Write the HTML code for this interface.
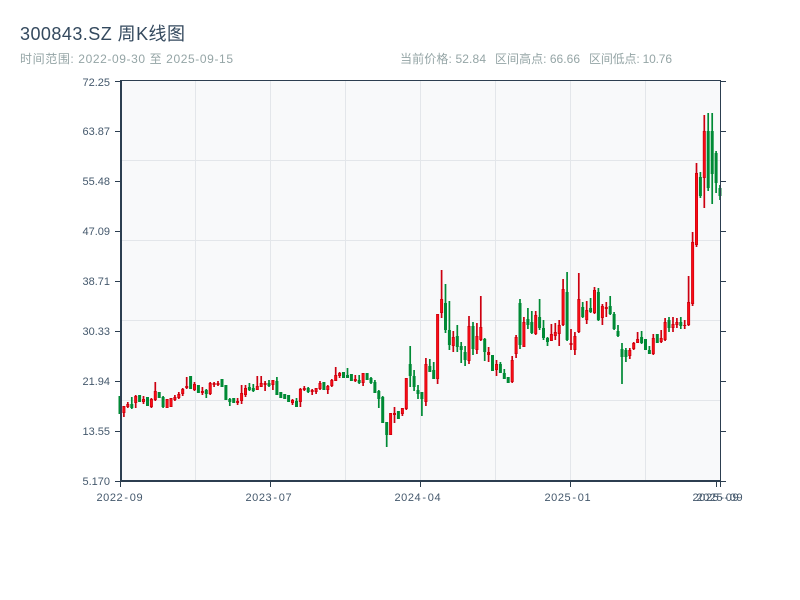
<!DOCTYPE html>
<html lang="zh">
<head>
<meta charset="utf-8">
<title>300843.SZ 周K线图</title>
<style>
html,body{margin:0;padding:0;background:#fff;width:800px;height:600px;overflow:hidden}
svg{display:block}
text{font-family:"Liberation Sans","Noto Sans CJK SC",sans-serif}
</style>
</head>
<body>
<svg width="800" height="600" viewBox="0 0 800 600" xmlns="http://www.w3.org/2000/svg">
<rect width="800" height="600" fill="#fff"/>
<text x="20" y="40" font-size="18" fill="#34495e" textLength="165">300843.SZ 周K线图</text>
<text x="20" y="63" font-size="12" fill="#95a5a6" textLength="213">时间范围: 2022-09-30 至 2025-09-15</text>
<text x="400" y="63" font-size="12" fill="#95a5a6" textLength="86">当前价格: 52.84</text>
<text x="495" y="63" font-size="12" fill="#95a5a6" textLength="85">区间高点: 66.66</text>
<text x="589" y="63" font-size="12" fill="#95a5a6" textLength="83">区间低点: 10.76</text>

<rect x="120" y="81" width="600" height="400" fill="#f8f9fa"/>
<path d="M120 160.5H720M120 240.5H720M120 320.5H720M120 400.5H720M195.5 81V481M270.5 81V481M345.5 81V481M420.5 81V481M495.5 81V481M570.5 81V481M645.5 81V481" stroke="#e3e6ea" stroke-width="1" fill="none"/>

<!-- red wicks -->
<path fill="none" stroke="#cc0010" stroke-width="1.7" d="M123.9 406V417M127.8 402V408M135.7 395V408M143.5 396V404M151.4 398V408M155.3 382V401M167.1 399V408M171 398V407M174.9 395V401M178.8 392V399M182.7 388V396M186.7 377V389M194.5 382V391M202.4 387V395M210.2 382V395M214.1 382V387M218 381V386M237.6 398V405M241.6 385V404M245.5 385V397M257.3 376V390M261.2 376V387M265.1 381V391M272.9 380V390M292.5 399V405M300.4 388V407M304.3 386V391M312.2 389V395M316.1 388V394M320 381V390M327.8 385V394M331.8 379V387M335.7 367V381M339.6 372V378M355.3 375V382M363.1 373V386M390.6 413V435M394.5 407V423M402.4 408V416M406.3 378V410M425.9 358V406M437.6 314V384M441.6 270V318M453.3 331V352M469 316V364M476.9 323V354M480.8 296V341M488.6 347V362M496.5 360V376M512.2 356V383M516.1 335V358M523.9 317V347M535.7 311V335M551.4 324V341M555.3 323V340M559.2 320V346M563.1 279V326M571 329V350M574.9 332V355M578.8 273V333M586.7 301V324M594.5 287V314M602.4 304V325M606.3 302V317M629.8 348V359M633.7 342V350M637.6 332V343M653.3 334V355M661.2 330V343M665.1 318V341M673 317V332M676.9 318V328M684.7 320V329M688.6 276V326M692.6 232V306M696.5 163V247M704.3 115V208"/>
<!-- red bodies -->
<path fill="none" stroke="#d0000c" stroke-width="3" d="M123.9 406V413M127.8 404V407M135.7 396V403M143.5 399V402M151.4 399V407M155.3 391V400M167.1 399V408M171 398V407M174.9 397V400M178.8 394V398M182.7 389V394M186.7 386V388M194.5 384V390M202.4 391V393M210.2 383V394M214.1 383V385M218 383V385M237.6 401V403M241.6 393V401M245.5 388V395M257.3 386V390M261.2 383V387M265.1 383V385M272.9 380V385M292.5 400V403M300.4 389V402M304.3 388V390M312.2 390V392M316.1 388V392M320 383V389M327.8 386V390M331.8 380V386M335.7 375V381M339.6 373V376M355.3 379V381M363.1 373V383M390.6 413V435M394.5 413V415M402.4 408V414M406.3 378V409M425.9 364V402M437.6 314V379M441.6 299V313M453.3 337V346M469 326V361M476.9 336V350M480.8 327V340M488.6 352V355M496.5 364V370M512.2 360V382M516.1 337V354M523.9 322V347M535.7 315V334M551.4 334V341M555.3 332V336M559.2 325V334M563.1 289V325M571 343V345M574.9 336V350M578.8 299V332M586.7 310V320M594.5 290V313M602.4 306V318M606.3 307V309M629.8 350V356M633.7 343V349M637.6 339V343M653.3 338V354M661.2 338V342M665.1 322V340M673 324V328M676.9 322V325M684.7 325V326M688.6 302V325M692.6 242V304M696.5 173V245M704.3 131V178"/>
<path fill="none" stroke="#f80c16" stroke-width="1.6" d="M123.9 407V412M127.8 405V406M135.7 397V402M143.5 400V401M151.4 400V406M155.3 392V399M167.1 400V407M171 399V406M174.9 398V399M178.8 395V397M182.7 390V393M194.5 385V389M210.2 384V393M241.6 394V400M245.5 389V394M257.3 387V389M261.2 384V386M272.9 381V384M292.5 401V402M300.4 390V401M316.1 389V391M320 384V388M327.8 387V389M331.8 381V385M335.7 376V380M339.6 374V375M363.1 374V382M390.6 414V434M402.4 409V413M406.3 379V408M425.9 365V401M437.6 315V378M441.6 300V312M453.3 338V345M469 327V360M476.9 337V349M480.8 328V339M496.5 365V369M512.2 361V381M516.1 338V353M523.9 323V346M535.7 316V333M551.4 335V340M555.3 333V335M559.2 326V333M563.1 290V324M574.9 337V349M578.8 300V331M586.7 311V319M594.5 291V312M602.4 307V317M629.8 351V355M633.7 344V348M637.6 340V342M653.3 339V353M661.2 339V341M665.1 323V339M673 325V327M676.9 323V324M688.6 303V324M692.6 243V303M696.5 174V244M704.3 132V177"/>

<!-- green wicks -->
<path fill="none" stroke="#008a35" stroke-width="1.7" d="M131.8 397V409M163.1 396V408M206.3 389V398M229.8 398V406M249.4 383V391M253.3 384V392M269 380V387M276.9 377V395M296.5 398V407M308.2 387V393M347.5 368V378M359.2 375V384M371 377V384M374.9 380V393M378.8 390V408M382.7 396V423M386.7 422V447M410.2 346V387M414.1 370V391M418 385V399M421.9 392V416M429.8 359V372M433.7 362V379M445.5 284V333M449.4 301V350M457.3 325V352M461.2 342V363M465.1 346V366M473 322V355M484.7 338V361M500.4 362V373M504.3 369V379M520 299V349M527.9 308V329M531.8 311V334M539.6 299V330M543.5 320V340M547.5 337V346M567.1 272V341M582.7 302V318M590.6 298V313M598.4 288V321M610.2 296V315M614.1 312V330M618 325V337M622 343V384M625.9 348V362M641.6 331V344M649.4 346V354M669 317V332M680.8 317V329M700.4 172V198M708.2 113V191M712.2 113V204M716.1 151V193M720 185V200"/>
<!-- green bodies -->
<path fill="none" stroke="#008a35" stroke-width="3" d="M120 396V414M131.8 404V408M139.6 395V402M147.5 397V406M159.2 392V398M163.1 397V407M190.6 376V389M198.4 385V393M206.3 390V394M222 379V387M225.9 385V400M229.8 399V402M233.7 398V403M249.4 387V390M253.3 388V391M269 383V386M276.9 381V395M280.8 392V398M284.7 394V399M288.6 395V402M296.5 401V407M308.2 388V392M323.9 382V390M343.5 372V378M347.5 375V378M351.4 374V381M359.2 380V383M367.1 373V380M371 378V383M374.9 382V393M378.8 391V399M382.7 397V423M386.7 422V435M398.4 411V419M410.2 364V376M414.1 376V387M418 390V394M421.9 392V399M429.8 366V372M433.7 370V379M445.5 303V330M449.4 330V345M457.3 336V347M461.2 346V350M465.1 352V360M473 326V349M484.7 339V352M492.5 355V371M500.4 364V373M504.3 373V379M508.2 377V383M520 303V345M527.9 319V325M531.8 322V333M539.6 317V328M543.5 328V338M547.5 338V342M567.1 292V340M582.7 307V317M590.6 308V312M598.4 292V320M610.2 306V314M614.1 314V329M618 331V336M622 349V357M625.9 350V357M641.6 337V343M645.5 339V350M649.4 350V354M657.3 334V343M669 320V328M680.8 322V326M700.4 177V196M708.2 131V188M712.2 131V174M716.1 153V183M720 188V196"/>

<!-- axes -->
<path fill="none" stroke="#2c3e50" stroke-width="1" d="M120 80.5H720.5M720.5 80V482"/>
<rect x="120" y="80" width="2" height="402" fill="#2c3e50"/>
<rect x="120" y="480" width="601" height="2" fill="#2c3e50"/>
<path fill="none" stroke="#2c3e50" stroke-width="1" d="M115 81.5H120M115 131.5H120M115 181.5H120M115 231.5H120M115 281.5H120M115 331.5H120M115 381.5H120M115 431.5H120M115 481.5H120M721 81.5H726M721 131.5H726M721 181.5H726M721 231.5H726M721 281.5H726M721 331.5H726M721 381.5H726M721 431.5H726M721 481.5H726M120.5 482V487M270.5 482V487M420.5 482V487M570.5 482V487M716.5 482V487M720.5 482V487"/>

<g font-size="11" fill="#44586c" text-anchor="end">
<text x="110" y="86">72.25</text>
<text x="110" y="135">63.87</text>
<text x="110" y="185">55.48</text>
<text x="110" y="235">47.09</text>
<text x="110" y="285">38.71</text>
<text x="110" y="335">30.33</text>
<text x="110" y="385">21.94</text>
<text x="110" y="435">13.55</text>
<text x="110" y="485">5.170</text>
</g>
<g font-size="11" fill="#44586c" letter-spacing=".55">
<text x="96.5" y="501">2022<tspan dx="1.2">-</tspan><tspan dx="1.2">09</tspan></text>
<text x="245.5" y="501">2023<tspan dx="1.2">-</tspan><tspan dx="1.2">07</tspan></text>
<text x="394.5" y="501">2024<tspan dx="1.2">-</tspan><tspan dx="1.2">04</tspan></text>
<text x="544.5" y="501">2025<tspan dx="1.2">-</tspan><tspan dx="1.2">01</tspan></text>
<text x="692.5" y="501">2025<tspan dx="1.2">-</tspan><tspan dx="1.2">09</tspan></text>
<text x="696.5" y="501">2025<tspan dx="1.2">-</tspan><tspan dx="1.2">09</tspan></text>
</g>
</svg>
</body>
</html>
